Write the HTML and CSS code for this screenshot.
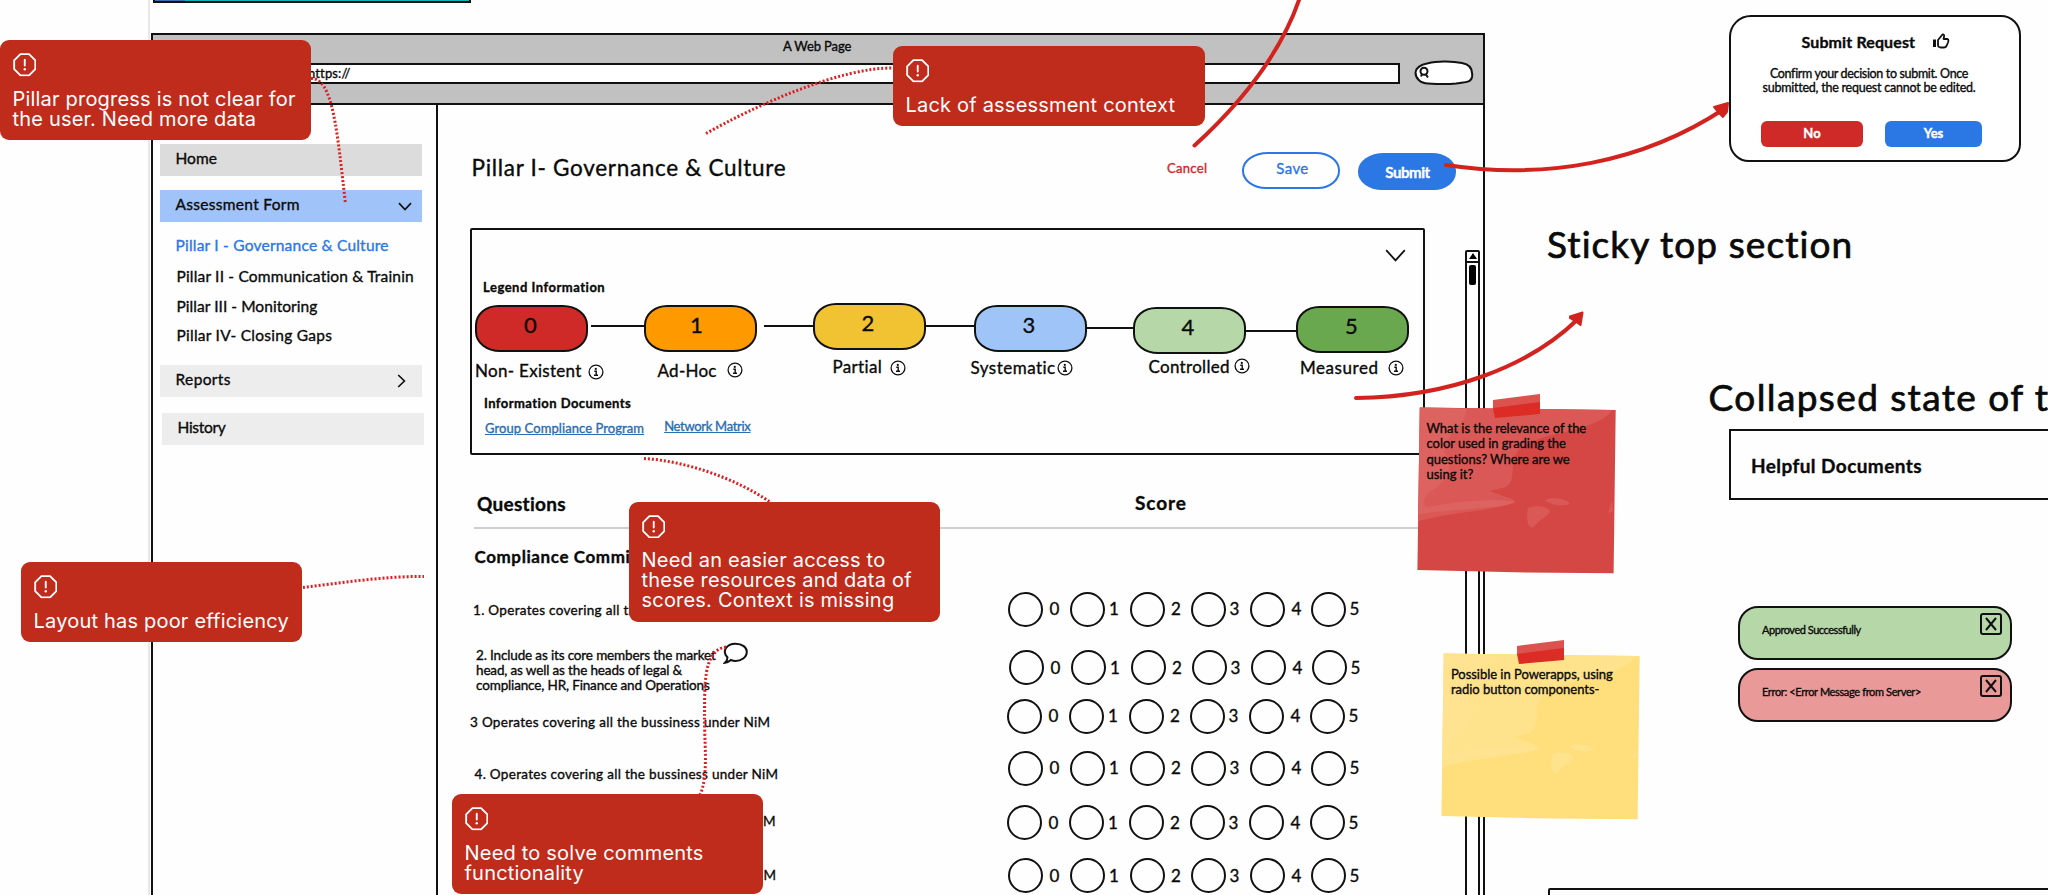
FILE: index.html
```html
<!DOCTYPE html>
<html lang="en">
<head>
<meta charset="utf-8">
<title>Assessment wireframe review</title>
<link rel="stylesheet" href="styles.css">
</head>
<body>
<svg class="defs" width="0" height="0" aria-hidden="true">
  <symbol id="info" viewBox="0 0 16 16"><circle cx="8" cy="8" r="6.9" fill="none" stroke="#111" stroke-width="1.3"/><circle cx="7.8" cy="4.9" r="1.1" fill="#111"/><path d="M6.3 7.3H8.2V11M6 11.2H10" fill="none" stroke="#111" stroke-width="1.4"/></symbol>
  <symbol id="alert" viewBox="0 0 24 24"><path d="M7.6 1.2H16.4L22.8 7.6V16.4L16.4 22.8H7.6L1.2 16.4V7.6Z" fill="none" stroke="#fff" stroke-width="1.9" stroke-linejoin="round"/><path d="M12 6.8V12.8" stroke="#fff" stroke-width="1.9" stroke-linecap="round"/><circle cx="12" cy="16.6" r="1.2" fill="#fff"/></symbol>
  <symbol id="sheet" viewBox="0 0 202 184"><path class="sheet-base" d="M3.8 15.5L199.7 18L197.6 181.3L110 180.5L1.4 178Z"/><path class="sheet-shine" d="M3.8 15.5L196 18C190 30 160 38 140 42C115 48 98 55 97 72C96 85 97 90 90 95L74 99C85 104 98 106 99 110C90 116 45 120 20 125L2 129Z"/><path class="sheet-shine2" d="M3.8 15.5L50 17C52 30 30 40 28 60C40 75 30 90 14 100C5 108 6 114 12 115C40 110 75 106 99 110C90 116 45 116 3 122Z"/><path class="sheet-shine" d="M129 108C136 104 152 107 154 112C146 115 134 113 129 108ZM112 116C120 112 134 115 134 120C130 126 122 128 118 135C111 138 110 124 112 116ZM196 108L197 119L192 121Z"/><path d="M77 8L124 2V14L77 17Z" fill="#dc524e"/><path d="M77 16L124 10V22L79 26Z" fill="#dc2c25"/></symbol>
</svg>

<main class="canvas">
  <div class="ruler"></div>
  <div class="strip"><i></i></div>

  <section class="window">
    <header class="chrome">
      <div class="chrome-title">A Web Page</div>
      <div class="chrome-row">
        <div class="url">https://</div>
        <svg class="search" width="60" height="26" viewBox="0 0 60 26"><path d="M14 3.200C24 0.500 40 1.500 48 3C57 4.500 59 10 58 17C57 23 50 22 42 23.500C32 24.500 22 24 14 23.500C6 23.500 1.500 18 1.500 12.500C2 7.500 7 4.500 14 3.200Z"/><circle cx="10" cy="11.300" r="3.500"/><path d="M11.500 14L14 17.500M8 14L7 16.500"/></svg>
      </div>
    </header>
    <div class="body">
      <nav class="side">
        <a class="nav home">Home</a>
        <a class="nav form">Assessment Form<svg width="14" height="9" viewBox="0 0 14 9"><path d="M1 1.2L7 7.6L13 1.2"/></svg></a>
        <div class="pillars">
          <a class="p1">Pillar I - Governance &amp; Culture</a>
          <a class="p2">Pillar II - Communication &amp; Trainin</a>
          <a class="p3">Pillar III - Monitoring</a>
          <a class="p4">Pillar IV- Closing Gaps</a>
        </div>
        <a class="nav reports">Reports<svg width="9" height="14" viewBox="0 0 9 14"><path d="M1.2 1L7.4 7L1.2 13"/></svg></a>
        <a class="nav history">History</a>
      </nav>
      <div class="content">
        <div class="head">
          <h1>Pillar I- Governance &amp; Culture</h1>
          <a class="cancel">Cancel</a>
          <button class="btn save">Save</button>
          <button class="btn submit">Submit</button>
        </div>
        <div class="legend">
          <div class="legend-top"><svg width="21" height="13" viewBox="0 0 21 13"><path d="M1.2 1.2L10.5 11.3L19.8 1.2"/></svg></div>
          <h2 class="legend-title">Legend Information</h2>
          <div class="steps">
            <div class="step s0"><b>0</b><div class="name">Non- Existent<svg><use href="#info"/></svg></div></div>
            <i class="link l0"></i>
            <div class="step s1"><b>1</b><div class="name">Ad-Hoc<svg><use href="#info"/></svg></div></div>
            <i class="link l1"></i>
            <div class="step s2"><b>2</b><div class="name">Partial<svg><use href="#info"/></svg></div></div>
            <i class="link l2"></i>
            <div class="step s3"><b>3</b><div class="name">Systematic<svg><use href="#info"/></svg></div></div>
            <i class="link l3"></i>
            <div class="step s4"><b>4</b><div class="name">Controlled<svg><use href="#info"/></svg></div></div>
            <i class="link l4"></i>
            <div class="step s5"><b>5</b><div class="name">Measured<svg><use href="#info"/></svg></div></div>
          </div>
          <h2 class="docs-title">Information Documents</h2>
          <div class="docs"><a class="d1">Group Compliance Program</a><a class="d2">Network Matrix</a></div>
        </div>
        <div class="cols"><h3>Questions</h3><h3 class="score">Score</h3></div>
        <h4>Compliance Committee</h4>
        <div class="rows">
          <div class="row r1"><p>1. Operates covering all the bussiness under NiM</p><div class="opts"><label>0</label><label>1</label><label>2</label><label>3</label><label>4</label><label>5</label></div></div>
          <div class="row r2"><p>2. Include as its core members the market<br>head, as well as the heads of legal &amp;<br>compliance, HR, Finance and Operations</p><svg class="bubble" width="26" height="23" viewBox="0 0 26 23"><path d="M4.5 15.5C-1.5 9.5 3.5 1.7 12.5 1.7C19.500 1.700 23.800 5.500 23.800 9.800C23.800 15.500 18 19 12.500 19C10.500 19 9 18.500 7.800 18C5.800 19.800 4.200 20.600 2 20.800C3.700 19.300 4.400 17.500 4.500 15.500Z"/></svg><div class="opts"><label>0</label><label>1</label><label>2</label><label>3</label><label>4</label><label>5</label></div></div>
          <div class="row r3"><p>3 Operates covering all the bussiness under NiM</p><div class="opts"><label>0</label><label>1</label><label>2</label><label>3</label><label>4</label><label>5</label></div></div>
          <div class="row r4"><p>4. Operates covering all the bussiness under NiM</p><div class="opts"><label>0</label><label>1</label><label>2</label><label>3</label><label>4</label><label>5</label></div></div>
          <div class="row r5"><p>5. Operates covering all the bussiness under NiM</p><div class="opts"><label>0</label><label>1</label><label>2</label><label>3</label><label>4</label><label>5</label></div></div>
          <div class="row r6"><p>6. Operates covering all the bussiness under NiM</p><div class="opts"><label>0</label><label>1</label><label>2</label><label>3</label><label>4</label><label>5</label></div></div>
        </div>
      </div>
      <div class="scroll"><div class="up"><svg width="8" height="6" viewBox="0 0 8 6"><path d="M4 0L8 6H0Z"/></svg></div><div class="thumb"></div></div>
    </div>
  </section>

  <h2 class="label sticky">Sticky top section</h2>
  <h2 class="label collapsed">Collapsed state of the</h2>
  <div class="helpful">Helpful Documents</div>
  <div class="frame"></div>

  <section class="toast ok"><span>Approved Successfully</span><svg width="22" height="22" viewBox="0 0 22 22"><rect x="1" y="1" width="20" height="20" rx="2"/><path d="M6 5L16 17M16 5L6 17"/></svg></section>
  <section class="toast err"><span>Error: &lt;Error Message from Server&gt;</span><svg width="22" height="22" viewBox="0 0 22 22"><rect x="1" y="1" width="20" height="20" rx="2"/><path d="M6 5L16 17M16 5L6 17"/></svg></section>

  <svg class="wires" width="2048" height="895" viewBox="0 0 2048 895">
    <path class="arrow" d="M1194.500 145.500Q1277 70 1301 -6"/>
    <path class="arrow" d="M1446 165C1545 180 1642 163 1724 109"/>
    <path class="tip" d="M1714 107L1728 103L1727 112L1723 117L1718 112Z"/>
    <path class="arrow" d="M1356 398C1450 397 1530 366 1578 319"/>
    <path class="tip" d="M1570 316.500L1582.500 312.500L1580.500 325L1576.500 322L1570 318Z"/>
  </svg>

  <section class="dialog">
    <h2>Submit Request<svg width="18" height="16" viewBox="0 0 18 16"><path d="M2.500 6.500V14" stroke-width="3"/><path d="M6 13.500V7L10.500 1.500C13 1 12 4 11.500 6H15.500C17 6.500 16.500 8 16 9.500L14.500 13C14 14 13 14.500 12 14.500H8.500L6 13.500"/></svg></h2>
    <p><span class="m1">Confirm your decision to submit. Once</span><br><span class="m2">submitted, the request cannot be edited.</span></p>
    <div class="choices"><button class="no">No</button><button class="yes">Yes</button></div>
  </section>

  <section class="note red"><svg width="202" height="184"><use href="#sheet"/></svg><p>What is the relevance of the<br>color used in grading the<br>questions? Where are we<br>using it?</p></section>
  <section class="note yellow"><svg width="202" height="184"><use href="#sheet"/></svg><p>Possible in Powerapps, using<br>radio button components-</p></section>

  <svg class="wires" width="2048" height="895" viewBox="0 0 2048 895">
    <path class="dots" d="M311 78.500C333 78 337 130 345.500 204"/>
    <path class="dots" d="M706 133.500C755 106 840 67 894 68"/>
    <path class="dots" d="M644 458.500C685 461 735 478 770 502"/>
    <path class="dots" d="M303 587.500C340 583 385 576 424 576.500"/>
    <path class="dots" d="M726 647C702 650 705 690 704.500 715S709 775 700 795"/>
  </svg>

  <aside class="callout c1"><svg><use href="#alert"/></svg><p>Pillar progress is not clear for<br>the user. Need more data</p></aside>
  <aside class="callout c2"><svg><use href="#alert"/></svg><p>Lack of assessment context</p></aside>
  <aside class="callout c3"><svg><use href="#alert"/></svg><p>Need an easier access to<br>these resources and data of<br>scores. Context is missing</p></aside>
  <aside class="callout c4"><svg><use href="#alert"/></svg><p>Need to solve comments<br>functionality</p></aside>
  <aside class="callout c5"><svg><use href="#alert"/></svg><p>Layout has poor efficiency</p></aside>
</main>
</body>
</html>
```
FILE: styles.css
```css
* { box-sizing: border-box; }
body { margin: 0; background: #fff; }
h1, h2, h3, h4, p { margin: 0; font-weight: 400; }
button { font: inherit; padding: 0; border: 0; background: none; display: block; }
svg { display: block; flex: none; }
.defs { position: absolute; }

/* whiteboard: every object is pinned on a free canvas */
.canvas { position: relative; width: 2048px; height: 895px; overflow: hidden; background: #fefefe; font-family: Lato, "Liberation Sans", sans-serif; color: #0a0a0a; -webkit-text-stroke: 0.35px; }
.ruler { position: absolute; left: 148px; top: 0; width: 2px; height: 895px; background: #e8e8e8; }
.strip { position: absolute; left: 153px; top: -8px; width: 318px; height: 11px; background: #0fb6b6; border: 2px solid #111; border-top: 0; }
.strip i { display: block; width: 30px; height: 9px; background: #3b6fb0; }

/* browser window */
.window { position: absolute; left: 151px; top: 33px; width: 1334px; height: 880px; border: 2px solid #111; background: #fefefe; display: flex; flex-direction: column; }
.chrome { height: 70px; flex: none; background: #c1c1c1; border-bottom: 2px solid #111; }
.chrome-title { height: 25px; padding-left: 630px; font-size: 13px; line-height: 22px; letter-spacing: -0.1px; }
.chrome-row { display: flex; align-items: center; gap: 14px; padding-left: 120px; }
.url { width: 1127px; height: 21px; border: 2px solid #111; background: #fff; padding-left: 33px; font-size: 13px; line-height: 16px; letter-spacing: 0.14px; }
.search { fill: #fff; stroke: #111; stroke-width: 2; }
.body { flex: 1; display: flex; }

/* sidebar */
.side { width: 285px; border-right: 2px solid #111; padding: 38.500px 0 0 6.500px; }
.nav { display: flex; justify-content: space-between; width: 262px; height: 32px; padding: 0 10px 0 16px; font-size: 15.500px; line-height: 28px; align-items: flex-start; }
.nav svg { fill: none; stroke: #111; stroke-width: 1.7; }
.home { background: #dcdcdc; }
.form { background: #a0c4f9; margin-top: 14px; letter-spacing: 0.3px; }
.form svg { margin-top: 12px; }
.pillars { display: flex; flex-direction: column; padding: 13.500px 0 0 16px; font-size: 15.500px; line-height: 20px; white-space: nowrap; }
.p1 { color: #2b78e4; letter-spacing: 0.22px; }
.p2 { margin: 11px 0 0 1px; letter-spacing: 0.19px; }
.p3 { margin: 10px 0 0 1px; letter-spacing: 0.05px; }
.p4 { margin: 9px 0 0 1px; letter-spacing: 0.26px; }
.reports { background: #ededed; margin-top: 19.500px; letter-spacing: 0.37px; padding-right: 16px; }
.reports svg { margin-top: 9px; }
.history { background: #ededed; margin: 16px 0 0 2px; letter-spacing: -0.3px; }

/* page content */
.content { width: 1027px; padding: 48.500px 0 0 32px; }
.head { display: flex; align-items: flex-start; height: 74.500px; }
.head h1 { width: 697px; font-size: 22.500px; line-height: 28px; letter-spacing: 0.7px; padding-left: 1.500px; }
.cancel { width: 75px; color: #cf2a27; font-size: 13px; line-height: 28px; letter-spacing: 0.32px; }
.btn { width: 98px; height: 37px; border-radius: 26px 24px 22px 24px / 18px; font-size: 15px; letter-spacing: 0.41px; margin-top: -1.500px; }
.save { color: #2b78e4; border: 2px solid #2b78e4; padding: 0 0 5px 3px; margin-top: -2px; }
.submit { background: #2b78e4; color: #fff; font-weight: 700; letter-spacing: -0.4px; margin: -0.500px 0 0 18px; padding-left: 1px; }
.legend { width: 955px; height: 227px; border: 2px solid #111; border-radius: 2px; padding-left: 3px; }
.legend-top { height: 42px; display: flex; justify-content: flex-end; padding: 19px 17px 0 0; }
.legend-top svg { fill: none; stroke: #111; stroke-width: 1.8; }
.legend-title, .docs-title { font-size: 13px; font-weight: 700; line-height: 20px; letter-spacing: 0.51px; padding-left: 8px; }
.legend-title { padding-top: 5px; height: 33px; }
.steps { display: flex; align-items: flex-start; height: 86px; }
.step { width: 113px; flex: none; display: flex; flex-direction: column; }
.step b { height: 47px; border: 2px solid #111; border-radius: 23px 25px 24px 25px / 20px; font-size: 22px; font-weight: 400; line-height: 36px; text-align: center; padding-right: 2px; }
.s1 b { padding-right: 7px; }
.name { display: flex; align-items: flex-start; white-space: nowrap; font-size: 17px; line-height: 20px; margin-top: 8.500px; }
.name svg { width: 16px; height: 16px; margin-left: 6px; }
.link { flex: none; height: 2px; background: #111; margin-top: 19.500px; }
.s0 b { background: #cf2a27; }
.s0 .name { letter-spacing: 0.3px; } .s0 .name svg { margin-top: 3px; }
.l0 { width: 53px; margin-left: 2.500px; }
.s1 b { background: #ff9900; }
.s1 .name { letter-spacing: 0.27px; margin-left: 14px; } .s1 .name svg { margin: 1px 0 0 10px; }
.l1 { width: 49px; margin-left: 7px; }
.s2 { margin-top: -2px; } .s2 b { background: #f1c232; }
.s2 .name { letter-spacing: 0.35px; margin: 6.500px 0 0 20px; } .s2 .name svg { margin: 3px 0 0 8px; }
.l2 { width: 48px; margin-top: 20px; }
.s3 b { background: #9fc5f8; }
.s3 .name { letter-spacing: 0.48px; margin: 5.500px 0 0 -3px; } .s3 .name svg { margin: 2px 0 0 1px; }
.l3 { width: 46px; margin-top: 22px; }
.s4 { margin-top: 2px; } .s4 b { background: #b6d7a8; }
.s4 .name { letter-spacing: 0.3px; margin: 2.500px 0 0 16px; } .s4 .name svg { margin: 1.500px 0 0 4px; }
.l4 { width: 50.500px; margin-top: 25px; }
.s5 { margin-top: 1px; } .s5 b { background: #6aa84f; }
.s5 .name { letter-spacing: 0.55px; margin: 4.500px 0 0 4px; } .s5 .name svg { margin: 2px 0 0 9px; }
.docs-title { letter-spacing: 0.45px; padding-left: 9px; height: 26px; padding-top: 2px; }
.docs { display: flex; padding-left: 10px; gap: 20px; font-size: 13px; line-height: 20px; color: #2a6db0; text-decoration: underline; }
.d1 { letter-spacing: 0.08px; padding-top: 1px; }
.d2 { letter-spacing: -0.3px; margin-top: -1px; }
.cols { display: flex; height: 74px; border-bottom: 2px solid #cfcfcf; margin-left: 4px; width: 951px; padding: 37px 0 0 3px; }
.cols h3 { width: 658px; font-size: 19px; font-weight: 700; line-height: 24px; letter-spacing: 0.29px; }
.cols .score { width: auto; letter-spacing: 0.94px; margin-top: -1.500px; }
.content h4 { font-size: 17px; font-weight: 700; line-height: 22px; letter-spacing: 0.6px; padding: 16.500px 0 0 4.500px; height: 62.500px; }
.rows { display: grid; grid-template-rows: 58.500px 48.800px 52px 54.700px 53px 40px; }
.row { display: flex; align-items: flex-start; }
.row p { width: 538px; flex: none; font-size: 13.500px; line-height: 16px; letter-spacing: 0.3px; white-space: nowrap; }
.r1 p { margin-top: 10.500px; padding-left: 3px; }
.r2 p { margin-top: -2.500px; padding-left: 6px; line-height: 15px; letter-spacing: -0.15px; width: 253px; }
.r3 p { margin-top: 15px; }
.r4 p { margin-top: 15.500px; padding-left: 4.500px; }
.r5 p { margin-top: 7.500px; padding-left: 2px; }
.r6 p { margin-top: 8.500px; padding-left: 2.500px; }
.bubble { fill: #fff; stroke: #111; stroke-width: 2; margin: -8.500px 260px 0 0; }
.opts { display: grid; grid-template-columns: 62px 59.500px 61px 59.500px 60.500px 50px; }
.r3 .opts, .r5 .opts { margin-left: -1px; }
.opts label { display: flex; align-items: center; gap: 6.500px; font-size: 17px; line-height: 30px; }
.opts label:nth-child(even) { gap: 4px; }
.opts label::before { content: ""; width: 31px; height: 31px; flex: none; border: 2px solid #111; border-radius: 50%; }
.scroll { width: 15px; margin-top: 145px; border: 2px solid #111; border-radius: 2px; background: #fff; }
.up { height: 11px; border-bottom: 2px solid #111; padding: 1px 0 0 2px; }
.thumb { width: 7px; height: 20px; margin: 2px; border-radius: 2px; background: #000; }

/* loose labels and frames */
.label { position: absolute; white-space: nowrap; font-size: 37px; line-height: 44px; -webkit-text-stroke-width: 0.7px; }
.sticky { left: 1547px; top: 222px; letter-spacing: 1.080px; }
.collapsed { left: 1708.500px; top: 375px; letter-spacing: 1.4px; }
.helpful { position: absolute; left: 1729px; top: 429px; width: 340px; height: 71px; border: 2px solid #111; padding-left: 20px; font-size: 19px; font-weight: 700; line-height: 70px; letter-spacing: 0.42px; }
.frame { position: absolute; left: 1548px; top: 888px; width: 520px; height: 30px; border: 2px solid #111; border-radius: 2px; }

.toast { position: absolute; left: 1738px; width: 274px; height: 54px; border: 2px solid #111; border-radius: 20px 18px 20px 20px; padding: 5px 8px 0 22px; display: flex; justify-content: space-between; font-size: 11px; line-height: 33px; white-space: nowrap; }
.toast svg { fill: none; stroke: #111; stroke-width: 2; }
.ok { top: 606px; background: #b6d7a8; letter-spacing: -0.46px; }
.err { top: 668px; background: #ea9999; letter-spacing: -0.36px; }

.dialog { position: absolute; left: 1729px; top: 15px; width: 292px; height: 147px; border: 2px solid #111; border-radius: 22px 20px 18px 20px; background: #fff; padding-top: 13.500px; }
.dialog h2 { display: flex; gap: 17px; padding-left: 70.500px; font-size: 16px; font-weight: 700; line-height: 22px; letter-spacing: 0.12px; }
.dialog h2 svg { margin-top: 2px; fill: none; stroke: #111; stroke-width: 1.8; stroke-linejoin: round; }
.dialog p { padding-top: 14px; text-align: center; font-size: 12.500px; line-height: 14.500px; padding-right: 12px; }
.m1 { letter-spacing: -0.34px; } .m2 { letter-spacing: -0.23px; }
.choices { display: flex; gap: 22px; padding: 25px 0 0 30px; }
.choices button { width: 102px; height: 26px; border-radius: 6px; color: #fff; font-size: 13px; font-weight: 700; padding-bottom: 2px; }
.no { background: #cf2a27; } .choices .yes { width: 97px; background: #2b78e4; }

.note { position: absolute; width: 202px; height: 184px; }
.note svg { position: absolute; inset: 0; }
.note p { position: relative; padding: 29px 0 0 10.500px; font-size: 13px; line-height: 15.300px; letter-spacing: -0.03px; white-space: nowrap; }
.red { left: 1416px; top: 392px; --base: #d54745; --shine: #da5957; --shine2: #df6a68; }
.yellow { left: 1440.400px; top: 638.200px; --base: #ffde7b; --shine: #ffe28b; --shine2: #ffe596; }
.sheet-base { fill: var(--base); } .sheet-shine { fill: var(--shine); } .sheet-shine2 { fill: var(--shine2); opacity: .6; }

.wires { position: absolute; left: 0; top: 0; pointer-events: none; fill: none; }
.arrow { stroke: #d2231f; stroke-width: 4; stroke-linecap: round; }
.tip { fill: #d2231f; stroke: #d2231f; stroke-width: 2; stroke-linejoin: round; }
.dots { stroke: #dc1f1f; stroke-width: 3; stroke-dasharray: 2 2; }

.callout { position: absolute; width: 311px; border-radius: 9px; background: #c02c1c; color: #fff; padding: 13px 0 11.500px 12.500px; font: 20px/20px Inter, "Liberation Sans", sans-serif; letter-spacing: 0.2px; white-space: nowrap; display: flex; flex-direction: column; gap: 12px; -webkit-text-stroke: 0; }
.callout svg { width: 23.500px; height: 23.500px; }
.c1 { left: 0; top: 40px; }
.c2 { left: 893px; top: 46px; width: 312px; }
.c3 { left: 629px; top: 501.500px; }
.c4 { left: 452px; top: 794px; }
.c5 { left: 21px; top: 562px; width: 281px; }
```
